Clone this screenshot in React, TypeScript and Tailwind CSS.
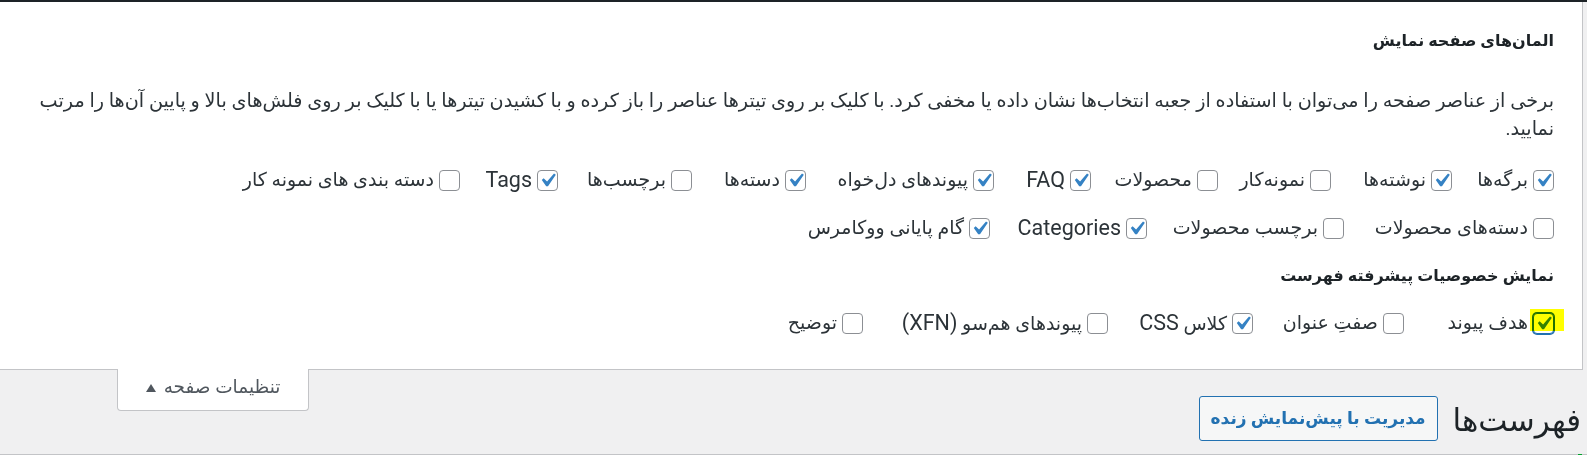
import clsx from 'clsx';

type Item = { label: string; checked?: boolean; focus?: boolean; w?: string };

const ROW1: Item[] = [
  { label: 'برگه‌ها', checked: true, w: 'w-[102px]' },
  { label: 'نوشته‌ها', checked: true, w: 'w-[121px]' },
  { label: 'نمونه‌کار', w: 'w-[113px]' },
  { label: 'محصولات', w: 'w-[127px]' },
  { label: 'FAQ', checked: true, w: 'w-[97px]' },
  { label: 'پیوندهای دل‌خواه', checked: true, w: 'w-[188px]' },
  { label: 'دسته‌ها', checked: true, w: 'w-[114px]' },
  { label: 'برچسب‌ها', w: 'w-[134px]' },
  { label: 'Tags', checked: true, w: 'w-[98px]' },
  { label: 'دسته بندی های نمونه کار' },
];

const ROW2: Item[] = [
  { label: 'دسته‌های محصولات', w: 'w-[210px]' },
  { label: 'برچسب محصولات', w: 'w-[197px]' },
  { label: 'Categories', checked: true, w: 'w-[157px]' },
  { label: 'گام پایانی ووکامرس', checked: true },
];

const ROW3: Item[] = [
  { label: 'هدف پیوند', checked: true, focus: true, w: 'w-[150px]' },
  { label: 'صفتِ عنوان', w: 'w-[151px]' },
  { label: 'کلاس CSS', checked: true, w: 'w-[145px]' },
  { label: 'پیوندهای هم‌سو (XFN)', w: 'w-[245px]' },
  { label: 'توضیح' },
];

// latin runs render larger, like the original font's bundled latin glyphs
function Label({ text }: { text: string }) {
  const parts = text.split(/([A-Za-z()]+)/);
  return (
    <span>
      {parts.map((p, i) =>
        /[A-Za-z()]/.test(p) ? (
          <span key={i} className="text-[21.5px]">
            {p}
          </span>
        ) : (
          p
        )
      )}
    </span>
  );
}

function Checkbox({ checked, focus }: { checked?: boolean; focus?: boolean }) {
  return (
    <span
      className={clsx(
        'relative flex h-[21px] w-[21px] shrink-0 items-center justify-center rounded-[4px] border bg-white',
        focus ? 'border-[#2271b1] shadow-[0_0_0_1px_#2271b1]' : 'border-[#8c8f94]'
      )}
    >
      {checked && (
        <svg viewBox="0 0 20 20" className="h-[27px] w-[27px] shrink-0">
          <path d="M14.83 4.89l1.34.94-5.81 8.38H9.02L5.78 9.67l1.34-1.25 2.57 2.4z" fill="#3582c4" />
        </svg>
      )}
      {focus && (
        <span className="absolute -top-[5px] bottom-[2px] -left-[4px] -right-[11px] bg-[#ffff00] mix-blend-multiply" />
      )}
    </span>
  );
}

function Row({ items }: { items: Item[] }) {
  return (
    <div className="flex h-[48px] items-center">
      {items.map((it) => (
        <label key={it.label} className={clsx('flex shrink-0 items-center gap-[5px] whitespace-nowrap', it.w)}>
          <Checkbox checked={it.checked} focus={it.focus} />
          <Label text={it.label} />
        </label>
      ))}
    </div>
  );
}

export default function App() {
  return (
    <div
      dir="rtl"
      className="h-[455px] w-[1587px] overflow-hidden bg-[#f0f0f1] font-['Roboto','DejaVu_Sans',sans-serif] text-[19px] text-[#2c3338]"
    >
      <div className="h-[2px] bg-[#1d2327]" />

      <div className="mr-[4px] h-[368px] border-r border-b border-[#c3c4c7] bg-white pr-[28px] pl-[20px]">
        <h2 className="pt-[27px] text-[16px] font-semibold leading-[24px] text-[#1d2327]">المان‌های صفحه نمایش</h2>
        <p className="mt-[34px] whitespace-nowrap text-[19.2px] leading-[28px]">
          برخی از عناصر صفحه را می‌توان با استفاده از جعبه انتخاب‌ها نشان داده یا مخفی کرد. با کلیک بر روی تیترها عناصر را باز کرده و با کشیدن تیترها یا با کلیک بر روی فلش‌های بالا و پایین آن‌ها را مرتب
          <br />
          نمایید.
        </p>
        <div className="mt-[13px]">
          <Row items={ROW1} />
          <Row items={ROW2} />
        </div>
        <h3 className="mt-[12px] text-[16px] font-semibold leading-[24px] text-[#1d2327]">نمایش خصوصیات پیشرفته فهرست</h3>
        <div className="mt-[11px]">
          <Row items={ROW3} />
        </div>
      </div>

      <div className="flex h-[84px] items-start justify-between">
        <div className="mr-[6px] flex items-center gap-[15px] pt-[24px]">
          <h1 className="pt-[4px] text-[31px] leading-[45px] text-[#1d2327]">فهرست‌ها</h1>
          <button className="flex h-[45px] w-[239px] items-center justify-center rounded-[3px] border border-[#2271b1] bg-[#f6f7f7] text-[17px] font-semibold text-[#2271b1]">
            مدیریت با پیش‌نمایش زنده
          </button>
        </div>
        <button className="-mt-[1px] ml-[117px] flex h-[42px] w-[192px] items-center justify-center gap-[8px] rounded-b-[4px] border-x border-b border-[#c3c4c7] bg-white pb-[4px] text-[18.5px] text-[#50575e]">
          <span>تنظیمات صفحه</span>
          <svg viewBox="0 0 10 8" className="h-[8px] w-[10px]">
            <path d="M5 0L10 8H0z" fill="#50575e" />
          </svg>
        </button>
      </div>

      <div className="flex h-[1px] bg-[#c3c4c7]">
        <div className="mr-[5px] w-[4px] bg-[#00a32a]" />
      </div>
    </div>
  );
}
